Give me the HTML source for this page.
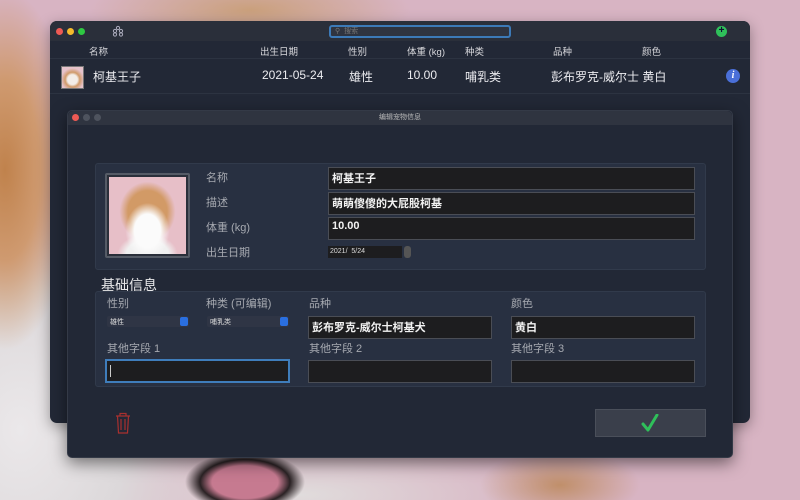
<!DOCTYPE html>
<html><head><meta charset="utf-8"><style>
*{margin:0;padding:0;box-sizing:border-box}
body{width:800px;height:500px;overflow:hidden;position:relative;font-family:"Liberation Sans","Noto Sans CJK SC",sans-serif;
background:
radial-gradient(ellipse 70px 180px at 5px 170px,#c0824c 0%,#cf9a70 50%,rgba(215,180,190,0) 100%),
radial-gradient(ellipse 180px 240px at 20px 430px,#ebe8ea 0%,#dcd8da 60%,rgba(215,180,190,0) 100%),
radial-gradient(ellipse 160px 40px at 250px 10px,#caa07c 0%,rgba(210,170,170,0) 100%),
radial-gradient(ellipse 80px 35px at 560px 485px,#c08f6a 0%,rgba(210,170,170,0) 100%),
radial-gradient(ellipse 250px 60px at 300px 495px,#e0dcdc 0%,rgba(210,170,170,0) 100%),
#d8b4c3;}
.abs{position:absolute}
.win{left:50px;top:21px;width:700px;height:402px;background:#222836;border-radius:7px;box-shadow:0 4px 14px rgba(0,0,0,.35)}
.tb{left:0;top:0;width:700px;height:20px;background:#2a2f3a;border-radius:7px 7px 0 0}
.dot{width:7px;height:7px;border-radius:50%}
.hdr{font-size:9.5px;color:#d8d8dc}
.row{font-size:12px;color:#ececf0}
.dlg{left:67px;top:110px;width:666px;height:348px;background:#222836;border-radius:5px;box-shadow:0 5px 16px rgba(0,0,0,.5);border:1px solid #343a47}
.dtb{left:0;top:0;width:664px;height:14px;background:#2f3440;border-radius:5px 5px 0 0}
.box{background:#283041;border:1px solid #313a4b;border-radius:3px}
.lbl{font-size:11px;color:#a6a9b0}
.inp{background:#1d1d1f;border:1px solid #4a4d55;font-size:11px;font-weight:bold;color:#f2f2f2;padding:2px 3px}
.pop{background:#2f3545;height:11px;font-size:7px;color:#ddd;padding:1px 3px;border-radius:2px}
.pop i{position:absolute;right:1px;top:1px;width:8px;height:9px;background:#2a6fe0;border-radius:2px}
</style></head><body>
<div class="abs" style="left:130px;top:455px;width:230px;height:45px;background:radial-gradient(ellipse 60px 30px at 50% 60%,#c67a90 0 55%,#2a2224 75%,rgba(40,30,30,0) 100%)"></div>
<div class="abs win">
 <div class="abs tb"></div>
 <div class="abs dot" style="left:6px;top:7px;background:#ee5a54"></div>
 <div class="abs dot" style="left:17px;top:7px;background:#f5bb2c"></div>
 <div class="abs dot" style="left:28px;top:7px;background:#2ec842"></div>
 <svg class="abs" style="left:62px;top:4px" width="12" height="12" viewBox="0 0 12 12" fill="none" stroke="#aab" stroke-width="1"><circle cx="6" cy="3" r="1.6"/><circle cx="3" cy="6" r="1.6"/><circle cx="9" cy="6" r="1.6"/><circle cx="3" cy="9.5" r="1.6"/><circle cx="9" cy="9.5" r="1.6"/></svg>
 <div class="abs" style="left:279px;top:4px;width:182px;height:13px;border:2px solid #3c7ab8;border-radius:3px;background:#2f3440"></div>
 <div class="abs" style="left:285px;top:5px;font-size:7px;color:#777">⚲ <span style="margin-left:2px">搜索</span></div>
 <div class="abs" style="left:666px;top:5px;width:11px;height:11px;border-radius:50%;background:#2fc05a;color:#113;font-size:10px;line-height:10px;text-align:center;font-weight:bold">+</div>
 <div class="abs hdr" style="left:39px;top:23px">名称</div>
 <div class="abs hdr" style="left:210px;top:23px">出生日期</div>
 <div class="abs hdr" style="left:298px;top:23px">性别</div>
 <div class="abs hdr" style="left:357px;top:23px">体重 (kg)</div>
 <div class="abs hdr" style="left:415px;top:23px">种类</div>
 <div class="abs hdr" style="left:503px;top:23px">品种</div>
 <div class="abs hdr" style="left:592px;top:23px">颜色</div>
 <div class="abs" style="left:0;top:37px;width:700px;height:1px;background:#2c3341"></div>
 <div class="abs" style="left:11px;top:45px;width:23px;height:23px;background:radial-gradient(circle at 50% 60%,#f3ede8 0 30%,#d09a6a 45%,#e6c3cc 70%);border:1px solid #777"></div>
 <div class="abs row" style="left:43px;top:47px">柯基王子</div>
 <div class="abs row" style="left:212px;top:47px">2021-05-24</div>
 <div class="abs row" style="left:299px;top:47px">雄性</div>
 <div class="abs row" style="left:357px;top:47px">10.00</div>
 <div class="abs row" style="left:415px;top:47px">哺乳类</div>
 <div class="abs row" style="left:501px;top:47px">彭布罗克-威尔士 黄白</div>
 <div class="abs" style="left:676px;top:48px;width:14px;height:14px;border-radius:50%;background:#4a6fd8;color:#fff;font:italic bold 10px 'Liberation Serif',serif;text-align:center;line-height:14px">i</div>
 <div class="abs" style="left:0;top:72px;width:700px;height:1px;background:#2c3341"></div>
</div>

<div class="abs dlg">
 <div class="abs dtb"></div>
 <div class="abs dot" style="left:4px;top:3px;background:#ee5a54"></div>
 <div class="abs dot" style="left:15px;top:3px;background:#4e535e"></div>
 <div class="abs dot" style="left:26px;top:3px;background:#4e535e"></div>
 <div class="abs" style="left:0;top:1px;width:664px;text-align:center;font-size:7px;color:#bbb">编辑宠物信息</div>

 <div class="abs box" style="left:27px;top:52px;width:611px;height:107px"></div>
 <div class="abs" style="left:37px;top:62px;width:85px;height:85px;border:2px solid #555b66;border-radius:2px;background:#2a2f3a;padding:2px">
  <div style="width:100%;height:100%;background:radial-gradient(ellipse 22px 28px at 50% 70%,#fbfbfb 0 60%,rgba(255,255,255,0) 100%),radial-gradient(ellipse 28px 30px at 50% 45%,#d29a66 0 70%,rgba(0,0,0,0) 100%),radial-gradient(ellipse 30px 20px at 50% 100%,#f0f0f0 0 70%,rgba(0,0,0,0) 100%),#e7bfc8"></div>
 </div>
 <div class="abs lbl" style="left:138px;top:58px">名称</div>
 <div class="abs lbl" style="left:138px;top:83px">描述</div>
 <div class="abs lbl" style="left:138px;top:108px">体重 (kg)</div>
 <div class="abs lbl" style="left:138px;top:133px">出生日期</div>
 <div class="abs inp" style="left:260px;top:56px;width:367px;height:23px">柯基王子</div>
 <div class="abs inp" style="left:260px;top:81px;width:367px;height:23px">萌萌傻傻的大屁股柯基</div>
 <div class="abs inp" style="left:260px;top:106px;width:367px;height:23px">10.00</div>
 <div class="abs" style="left:260px;top:135px;width:74px;height:12px;background:#1d1d1f;font-size:7px;color:#ddd;padding:2px">2021/&nbsp; 5/24</div>
 <div class="abs" style="left:336px;top:135px;width:7px;height:12px;background:#555;border-radius:3px"></div>

 <div class="abs" style="left:33px;top:164px;font-size:14px;color:#e8e8ea">基础信息</div>
 <div class="abs box" style="left:27px;top:180px;width:611px;height:96px"></div>
 <div class="abs lbl" style="left:39px;top:184px">性别</div>
 <div class="abs lbl" style="left:138px;top:184px">种类 (可编辑)</div>
 <div class="abs lbl" style="left:241px;top:184px">品种</div>
 <div class="abs lbl" style="left:443px;top:184px">颜色</div>
 <div class="abs pop" style="left:39px;top:205px;width:82px">雄性<i></i></div>
 <div class="abs pop" style="left:139px;top:205px;width:82px">哺乳类<i></i></div>
 <div class="abs inp" style="left:240px;top:205px;width:184px;height:23px">彭布罗克-威尔士柯基犬</div>
 <div class="abs inp" style="left:443px;top:205px;width:184px;height:23px">黄白</div>
 <div class="abs lbl" style="left:39px;top:229px">其他字段 1</div>
 <div class="abs lbl" style="left:241px;top:229px">其他字段 2</div>
 <div class="abs lbl" style="left:443px;top:229px">其他字段 3</div>
 <div class="abs inp" style="left:37px;top:248px;width:185px;height:24px;border:2px solid #3f7dbb"><span style="display:inline-block;width:1px;height:12px;background:#ccc;margin-top:2px"></span></div>
 <div class="abs inp" style="left:240px;top:249px;width:184px;height:23px"></div>
 <div class="abs inp" style="left:443px;top:249px;width:184px;height:23px"></div>

 <svg class="abs" style="left:46px;top:300px" width="18" height="24" viewBox="0 0 18 24" fill="none" stroke="#a8302f" stroke-width="1.2"><path d="M2 5h14M6 5V2.5h6V5M3.5 5l1 17h9l1-17M7 8v11M11 8v11"/></svg>
 <div class="abs" style="left:527px;top:298px;width:111px;height:28px;background:#3a3f4b;border:1px solid #4a4f5a"></div>
 <svg class="abs" style="left:573px;top:303px" width="18" height="18" viewBox="0 0 18 18"><path d="M2 10l5 6L16 1" fill="none" stroke="#2fbf5a" stroke-width="3" stroke-linecap="round" stroke-linejoin="round"/></svg>
</div>
</body></html>
